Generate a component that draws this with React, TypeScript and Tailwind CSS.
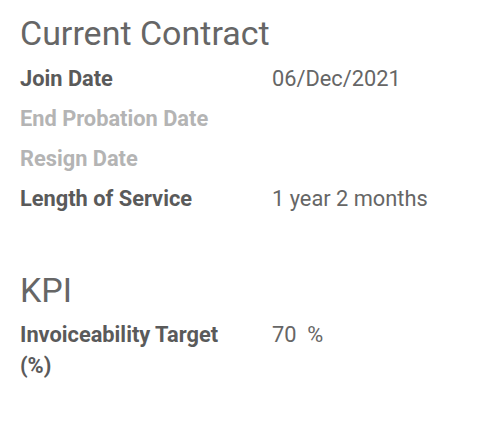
import React from "react";

const Row = ({ label, value, muted }: { label: string; value?: string; muted?: boolean }) => (
  <div className="flex h-[40px] items-center">
    <div className={`w-[252px] font-bold ${muted ? "text-[#b4b4b4]" : "text-[#5a5a5a]"}`}>{label}</div>
    <div className="text-[#666666]">{value}</div>
  </div>
);

export default function App() {
  return (
    <div className="h-[424px] w-[500px] bg-white pl-[20px] pt-[13px] text-[21.8px]" style={{ fontFamily: "Roboto, sans-serif" }}>
      <h1 className="text-[34px] leading-[40px] text-[#666666]">Current Contract</h1>
      <div className="mt-[6px]">
        <Row label="Join Date" value="06/Dec/2021" />
        <Row label="End Probation Date" muted />
        <Row label="Resign Date" muted />
        <Row label="Length of Service" value="1 year 2 months" />
      </div>
      <h1 className="mt-[51px] text-[34px] leading-[40px] text-[#666666]">KPI</h1>
      <div className="mt-[9px] flex">
        <div className="w-[252px] font-bold leading-[31px] text-[#5a5a5a]">
          Invoiceability Target
          <br />
          (%)
        </div>
        <div className="leading-[31px] text-[#666666]">70&nbsp;&nbsp;%</div>
      </div>
    </div>
  );
}
